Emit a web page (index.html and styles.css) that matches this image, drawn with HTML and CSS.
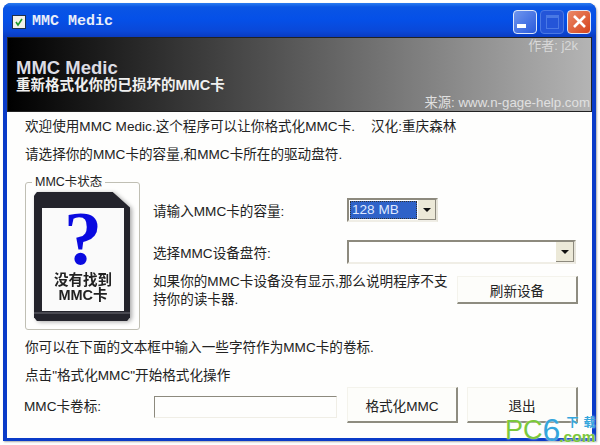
FILE: index.html
```html
<!DOCTYPE html>
<html lang="zh-CN">
  <head>
    <meta charset="UTF-8" />
    <title>MMC Medic</title>
    <link rel="stylesheet" href="styles.css">
  </head>
  <body>
    <div class="window">
      <div class="titlebar">
        <svg class="app-icon" width="14" height="14" viewBox="0 0 14 14">
          <rect x="0.5" y="0.5" width="13" height="13" fill="#f2f2ea" stroke="#20304a" />
          <path d="M4 7l2 3L10 4" fill="none" stroke="#1c9a2c" stroke-width="1.6" />
        </svg>
        <span class="title-text">MMC Medic</span>
        <div class="caption-buttons">
          <div class="cap cap-min"><span class="min-glyph"></span></div>
          <div class="cap cap-max"><span class="max-glyph"></span></div>
          <div class="cap cap-close">
            <svg width="15" height="15" viewBox="0 0 15 15">
              <path d="M2 2l11 11M13 2L2 13" stroke="#fff" stroke-width="2.6" />
            </svg>
          </div>
        </div>
      </div>

      <div class="client">
        <div class="banner">
          <div class="author">作者: j2k</div>
          <div class="banner-title">MMC Medic</div>
          <div class="banner-sub">重新格式化你的已损坏的MMC卡</div>
          <div class="source">来源: www.n-gage-help.com</div>
        </div>

        <div class="intro">
          <div class="intro-row">
            <span>欢迎使用MMC Medic.这个程序可以让你格式化MMC卡.</span>
            <span class="credit">汉化:重庆森林</span>
          </div>
          <div class="intro-row second">请选择你的MMC卡的容量,和MMC卡所在的驱动盘符.</div>
        </div>

        <div class="middle">
          <fieldset class="status-box">
            <legend>MMC卡状态</legend>
            <div class="sd-shadow">
              <div class="sd-card">
                <div class="sd-label">
                  <svg class="question" width="40" height="65" viewBox="0 0 40 65">
                    <text x="20" y="56" text-anchor="middle">?</text>
                  </svg>
                  <div class="sd-text">没有找到<br>MMC卡</div>
                </div>
              </div>
            </div>
          </fieldset>

          <div class="controls">
            <div class="control-row">
              <span class="control-label">请输入MMC卡的容量:</span>
              <div class="combo combo-small">
                <div class="combo-value"><span class="selected">128 MB</span></div>
                <div class="combo-arrow"><span class="arrow"></span></div>
              </div>
            </div>
            <div class="control-row">
              <span class="control-label">选择MMC设备盘符:</span>
              <div class="combo combo-wide">
                <div class="combo-value"></div>
                <div class="combo-arrow"><span class="arrow"></span></div>
              </div>
            </div>
            <div class="note-row">
              <p class="note">如果你的MMC卡设备没有显示,那么说明程序不支持你的读卡器.</p>
              <div class="btn btn-refresh">刷新设备</div>
            </div>
          </div>
        </div>

        <p class="hint hint-first">你可以在下面的文本框中输入一些字符作为MMC卡的卷标.</p>
        <p class="hint hint-second">点击"格式化MMC"开始格式化操作</p>

        <div class="bottom-row">
          <span class="volume-label">MMC卡卷标:</span>
          <div class="text-input"></div>
          <div class="btn btn-format">格式化MMC</div>
          <div class="btn btn-exit">退出</div>
        </div>
      </div>
    </div>

    <div class="watermark">
      <span class="wm-pc">PC</span><span class="wm-six">6</span>
      <span class="wm-side"><span class="wm-cn">下载</span><span class="wm-com">.com</span></span>
    </div>
  </body>
</html>
```

FILE: styles.css
```css
html,
body {
  margin: 0;
  padding: 0;
}
body {
  width: 600px;
  height: 445px;
  background: #fff;
  overflow: hidden;
  position: relative;
  font-family: "Liberation Sans", "Noto Sans CJK SC", sans-serif;
  font-size: 13.6px;
  color: #222;
}
.window {
  margin: 3px 0 0 3px;
  width: 593px;
  height: 438px;
  background: #0a3bc8;
  border-radius: 8px 8px 0 0;
  display: flex;
  flex-direction: column;
  box-shadow: 1px 1px 2px #aaa;
}
.titlebar {
  height: 34px;
  flex: none;
  box-sizing: border-box;
  display: flex;
  align-items: center;
  padding: 3px 5px 0 9px;
  border-radius: 8px 8px 0 0;
  background: linear-gradient(#2a7cf0 0, #0a55e4 4px, #0550e8 16px, #0a48d8 28px, #0a3bc0 34px);
}
.app-icon {
  margin-right: 6px;
}
.title-text {
  font-family: "Liberation Mono", monospace;
  font-weight: bold;
  font-size: 15px;
  color: #e8eef8;
}
.caption-buttons {
  margin-left: auto;
  display: flex;
  gap: 3px;
}
.cap {
  width: 24px;
  height: 24px;
  box-sizing: border-box;
  border: 1px solid #dfe8f8;
  border-radius: 4px;
  display: flex;
  align-items: center;
  justify-content: center;
  background: linear-gradient(135deg, #6f95ee, #2a5bdc);
}
.cap-max {
  border-color: #4a78e4;
  background: #2455d8;
}
.cap-close {
  background: linear-gradient(135deg, #eb8a68, #d5431c);
}
.min-glyph {
  width: 9px;
  height: 4px;
  background: #fff;
  margin-top: 9px;
  margin-right: 7px;
}
.max-glyph {
  width: 13px;
  height: 14px;
  box-sizing: border-box;
  border: 1px solid #4a78e4;
  border-top-width: 3px;
}
.client {
  flex: 1;
  margin: 0 4px 3px 4px;
  background: #fefefd;
  display: flex;
  flex-direction: column;
  min-height: 0;
}
.banner {
  height: 75px;
  flex: none;
  box-sizing: border-box;
  border: 1px solid #222;
  background: linear-gradient(90deg, #000, #b4b4b4);
  position: relative;
  padding: 20px 0 0 8px;
  color: #e8e8e8;
}
.banner-title {
  font-size: 18.5px;
  line-height: 19px;
  font-weight: bold;
  color: #dcdce4;
}
.banner-sub {
  font-size: 14.5px;
  line-height: 16px;
  font-weight: bold;
  color: #f0f0f0;
}
.author {
  position: absolute;
  top: 0;
  right: 13px;
  font-size: 13px;
  line-height: 16px;
  color: #d8d8d8;
}
.source {
  position: absolute;
  right: 1px;
  bottom: 0;
  font-size: 13.3px;
  line-height: 17px;
  color: #e0e0e0;
}
.intro {
  padding: 6px 0 0 18px;
}
.intro-row {
  display: flex;
  line-height: 18px;
  height: 18px;
}
.intro-row.second {
  margin-top: 10px;
}
.credit {
  margin-left: 16px;
}
.middle {
  display: flex;
  padding-left: 18px;
  margin-top: 11px;
  height: 155px;
}
.status-box {
  margin: 0;
  padding: 0;
  width: 115px;
  height: 155px;
  box-sizing: border-box;
  border: 1px solid #c0bfb4;
  border-radius: 3px;
  flex: none;
}
.status-box legend {
  font-size: 12.5px;
  line-height: 14px;
  padding: 0 3px;
  margin-left: 6px;
}
.sd-shadow {
  margin: 3px 0 0 8px;
  width: 96px;
  filter: drop-shadow(2px 1px 2px #aaa);
}
.sd-card {
  height: 129px;
  box-sizing: border-box;
  padding: 16px 6px 10px 8px;
  background: linear-gradient(#24242c 0 93%, #4a4a52 93% 94.5%, #24242c 94.5%);
  clip-path: polygon(3% 0, 82% 0, 100% 12%, 100% 97%, 97% 100%, 3% 100%, 0 97%, 0 3%);
}
.sd-label {
  height: 100%;
  background: #fafafa;
  display: flex;
  flex-direction: column;
  align-items: center;
}
.question {
  flex: none;
}
.question text {
  font-family: "Liberation Serif", serif;
  font-weight: bold;
  font-size: 76px;
  fill: #0a0ae0;
}
.sd-text {
  font-size: 14.5px;
  line-height: 15px;
  font-weight: bold;
  text-align: center;
  color: #222;
}
.controls {
  flex: 1;
  padding: 23px 0 0 13px;
  min-width: 0;
}
.control-row {
  display: flex;
  align-items: flex-start;
  height: 24px;
}
.control-row + .control-row {
  margin-top: 18px;
}
.control-label {
  width: 194px;
  flex: none;
  padding-top: 5px;
  line-height: 18px;
}
.combo {
  height: 24px;
  box-sizing: border-box;
  border: 2px solid #8d8a7e;
  border-right-color: #e6e4da;
  border-bottom-color: #f0eee6;
  display: flex;
  background: #fff;
}
.combo-small {
  width: 91px;
}
.combo-wide {
  width: 229px;
}
.combo-value {
  flex: 1;
  padding: 1px;
  display: flex;
}
.selected {
  flex: 1;
  background: #2f62c8;
  color: #dfe8ff;
  padding-left: 2px;
  line-height: 17px;
  outline: 1px dotted #333;
  outline-offset: -1px;
}
.combo-arrow {
  width: 17px;
  flex: none;
  background: #ece9d8;
  border-right: 1px solid #8d8a7e;
  border-bottom: 1px solid #8d8a7e;
  display: flex;
  align-items: center;
  justify-content: center;
}
.arrow {
  width: 0;
  height: 0;
  border-left: 4px solid transparent;
  border-right: 4px solid transparent;
  border-top: 4px solid #111;
}
.note-row {
  display: flex;
  margin-top: 9px;
}
.note {
  margin: 0;
  width: 296px;
  flex: none;
  line-height: 18px;
}
.btn {
  box-sizing: border-box;
  background: #fdfdfa;
  border: 1px solid #f4f3ec;
  border-right: 2px solid #8e8c80;
  border-bottom: 2px solid #8e8c80;
  display: flex;
  align-items: center;
  justify-content: center;
  flex: none;
}
.btn-refresh {
  width: 121px;
  height: 28px;
  margin-left: 8px;
  margin-top: 3px;
}
.hint {
  margin: 0;
  padding-left: 18px;
  line-height: 18px;
}
.hint-first {
  margin-top: 9px;
}
.hint-second {
  margin-top: 10px;
}
.bottom-row {
  display: flex;
  align-items: center;
  padding-left: 17px;
  margin-top: 2px;
}
.volume-label {
  width: 130px;
  flex: none;
}
.text-input {
  width: 183px;
  height: 22px;
  margin-top: 4px;
  box-sizing: border-box;
  border: 1px solid #8d8a7e;
  border-right-color: #f0eee6;
  border-bottom-color: #f0eee6;
  flex: none;
}
.btn-format {
  width: 111px;
  height: 36px;
  margin-left: 10px;
}
.btn-exit {
  width: 111px;
  height: 36px;
  margin-left: 9px;
}
.watermark {
  position: absolute;
  left: 505px;
  top: 416px;
  width: 95px;
  height: 29px;
  display: flex;
  align-items: flex-start;
  text-shadow: 0 0 2px #fff;
}
.wm-pc {
  font-size: 27px;
  line-height: 29px;
  color: #7cc83c;
}
.wm-six {
  font-size: 32px;
  line-height: 28px;
  color: #35a6dc;
}
.wm-side {
  display: flex;
  flex-direction: column;
  align-items: flex-end;
  margin-left: -1px;
}
.wm-cn {
  font-size: 12px;
  line-height: 14px;
  font-weight: bold;
  color: #35a6dc;
  letter-spacing: 5px;
  margin-right: -5px;
}
.wm-com {
  font-size: 15.5px;
  line-height: 14px;
  font-weight: bold;
  color: #7cc83c;
}
```
